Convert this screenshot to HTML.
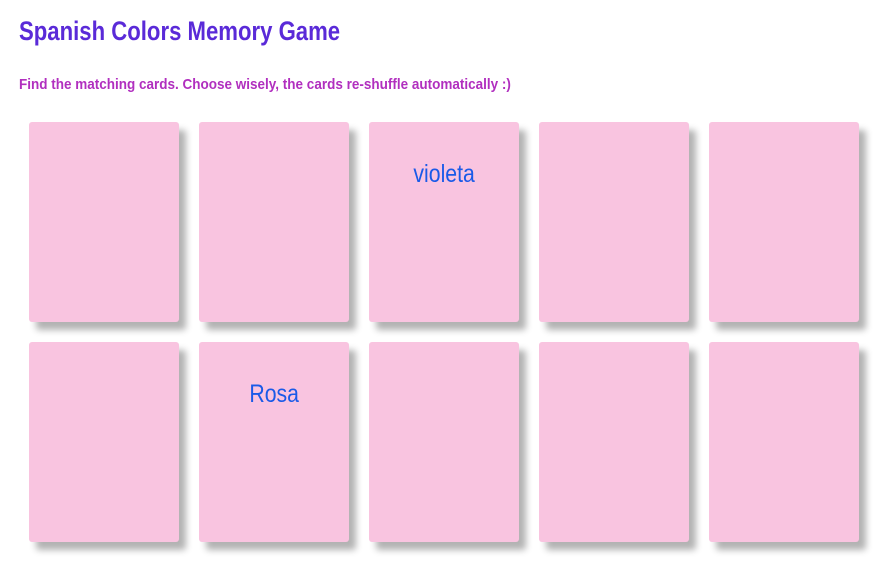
<!DOCTYPE html>
<html><head><style>
body{margin:0;background:#fff;width:891px;height:571px;overflow:hidden;font-family:"Liberation Sans",sans-serif;}
h1{position:absolute;left:19px;top:16px;margin:0;font-size:27px;font-weight:bold;color:#5a2ad8;white-space:nowrap;transform:scaleX(0.82);transform-origin:0 0}
p{position:absolute;left:19px;top:76px;margin:0;font-size:15px;font-weight:bold;color:#b12fbf;white-space:nowrap;transform:scaleX(0.9);transform-origin:0 0}
.c{position:absolute;width:150px;height:200px;background:#f9c4e0;border-radius:3px;box-shadow:7px 8px 7px rgba(0,0,0,0.3);text-align:center;color:#1a5ae8;font-size:25px;box-sizing:border-box;padding-top:38px}
.c span{display:inline-block;transform:scaleX(0.85)}
</style></head><body>
<h1>Spanish Colors Memory Game</h1>
<p>Find the matching cards. Choose wisely, the cards re-shuffle automatically :)</p>
<div class="c" style="left:29px;top:122px"></div>
<div class="c" style="left:199px;top:122px"></div>
<div class="c" style="left:369px;top:122px"><span>violeta</span></div>
<div class="c" style="left:539px;top:122px"></div>
<div class="c" style="left:709px;top:122px"></div>
<div class="c" style="left:29px;top:342px"></div>
<div class="c" style="left:199px;top:342px"><span>Rosa</span></div>
<div class="c" style="left:369px;top:342px"></div>
<div class="c" style="left:539px;top:342px"></div>
<div class="c" style="left:709px;top:342px"></div>
</body></html>
